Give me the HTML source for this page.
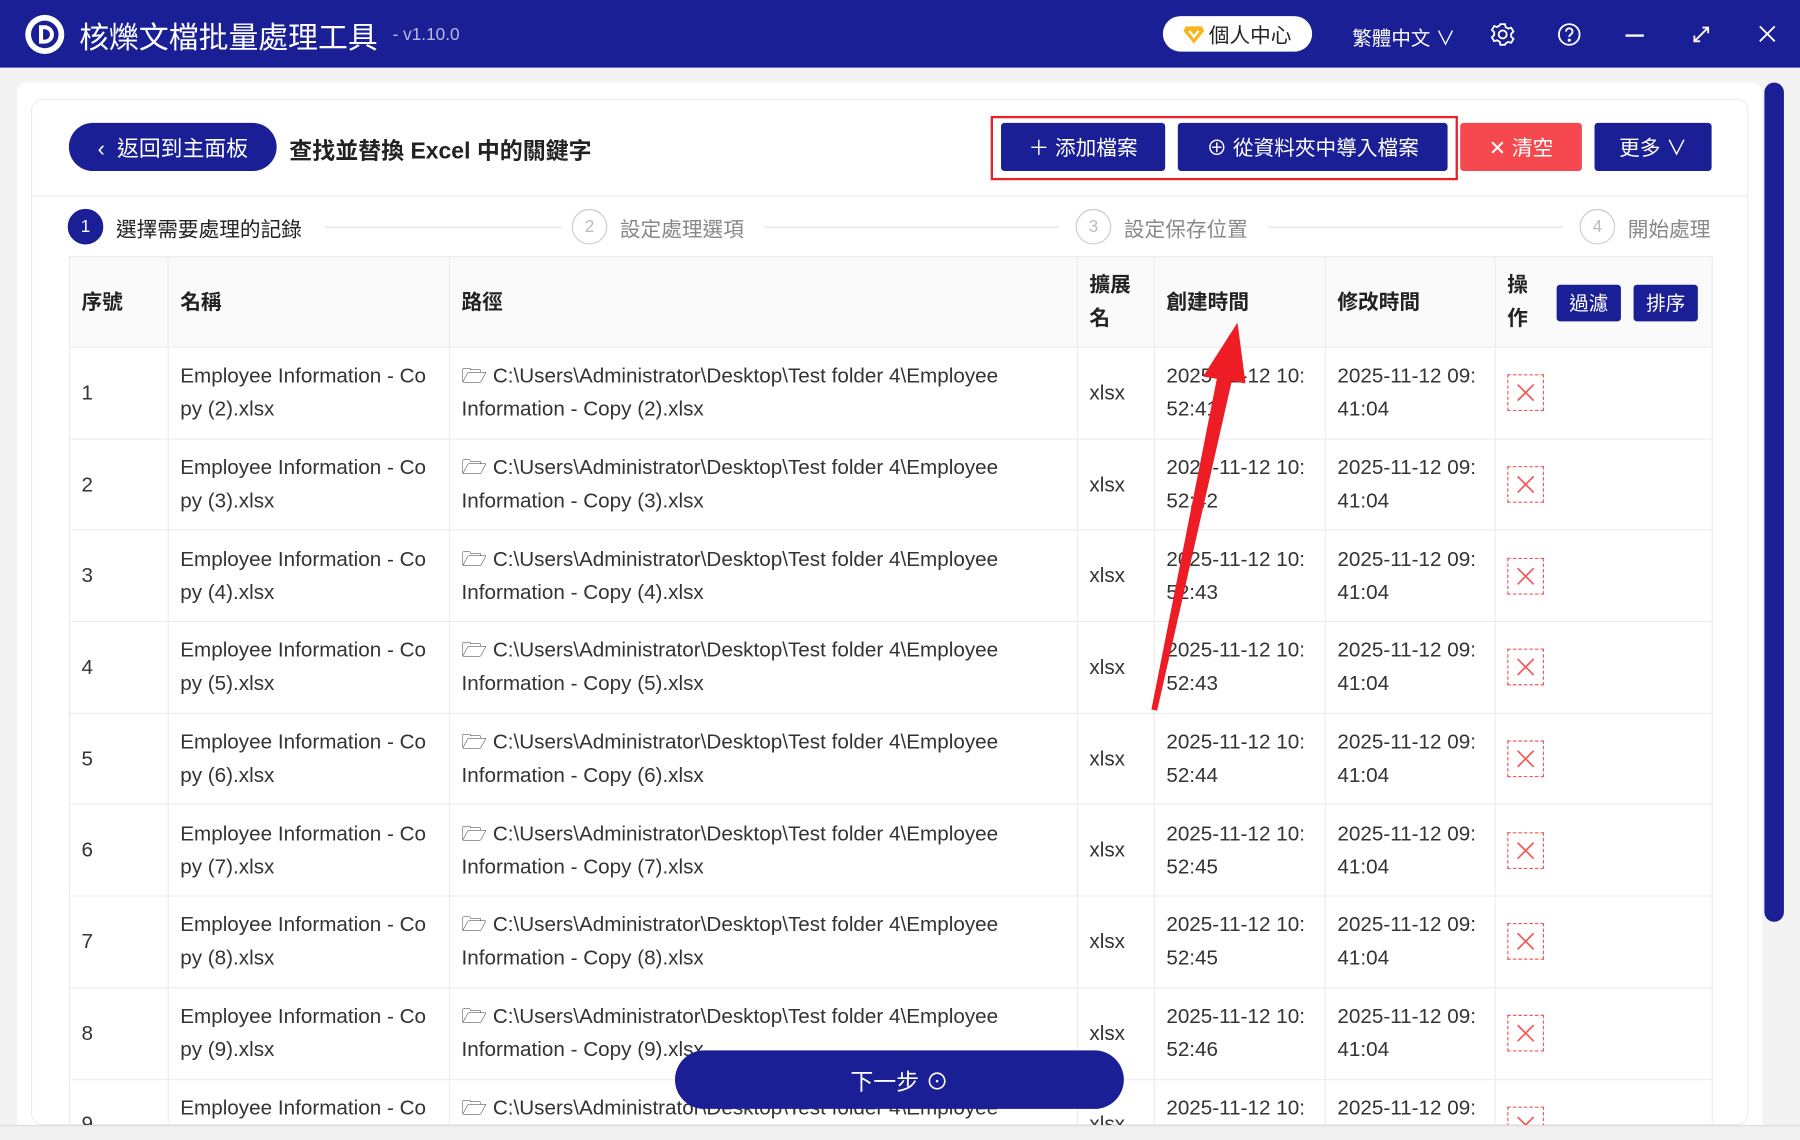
<!DOCTYPE html>
<html><head><meta charset="utf-8">
<style>
*{box-sizing:border-box;margin:0;padding:0}
html,body{width:1800px;height:1140px;overflow:hidden;background:#e9e9e9}
#w{position:absolute;left:0;top:0;width:1568px;height:993px;overflow:hidden;transform:scale(1.147959);transform-origin:0 0;font-family:"Liberation Sans","Noto Sans CJK TC",sans-serif;color:#333}
.a{position:absolute}
.tb{left:0;top:0;width:1568px;height:59px;background:#1a1f96}
.body{left:0;top:59px;width:1568px;height:934px;background:#f3f3f3}
.outer{left:15px;top:72px;width:1520px;height:908px;background:#fff;border-radius:8px 8px 0 0;overflow:hidden}
.card{left:27px;top:86px;width:1496px;height:894px;border:1px solid #ececec;border-radius:10px;background:#fff;overflow:hidden}
.btn{position:absolute;background:#1a1f96;color:#fff;font-size:18px;display:flex;align-items:center;justify-content:center;border-radius:3px}
.step{position:absolute;top:182px;width:31px;height:31px;border-radius:50%;border:1.5px solid #ccc;color:#bbb;font-size:15px;display:flex;align-items:center;justify-content:center}
.stx{position:absolute;top:186px;font-size:18px;color:#888}
.ln{position:absolute;top:197px;height:2px;background:#ececec}
.clip{position:absolute;left:0;top:0;width:1568px;height:980px;overflow:hidden}
table{position:absolute;left:60px;top:223px;border-collapse:collapse;table-layout:fixed;width:1431px}
td,th{border:1px solid #ececec;font-size:18px;line-height:29px;vertical-align:middle;padding:0 10px;text-align:left;white-space:nowrap;overflow:hidden}
th{background:#fafafa;height:79px;font-weight:bold;color:#222;font-size:18px}
td{height:79.7px;color:#333}
.x{width:32px;height:32px;border:1px dashed #f05a5a;display:flex;align-items:center;justify-content:center}
</style></head><body>
<div id="w">
<div class="a tb"></div>
<svg class="a" style="left:21px;top:12px" width="36" height="36"><circle cx="18" cy="18" r="17" fill="#fff"/><circle cx="18" cy="18" r="12" fill="#1a1f96"/><path d="M13 10h5a8 8 0 010 16h-5z" fill="#fff"/><path d="M16.5 13.5h1.5a4.5 4.5 0 010 9h-1.5z" fill="#1a1f96"/></svg>
<div class="a" style="left:69px;top:13px;font-size:26px;color:#fff">核爍文檔批量處理工具</div>
<div class="a" style="left:342px;top:22px;font-size:15px;color:#b8bbe0">- v1.10.0</div>
<div class="a" style="left:1013px;top:14px;width:130px;height:31px;background:#fff;border-radius:16px;font-size:18px;color:#222;display:flex;align-items:center;padding-left:18px"><svg width="18" height="16" viewBox="0 0 18 16"><path d="M2 1h14l2 4-9 11L0 5z" fill="#f6b51d"/><path d="M5 5l4 5 4-5" stroke="#fff" stroke-width="2" fill="none"/></svg><span style="margin-left:4px">個人中心</span></div>
<div class="a" style="left:1178px;top:19px;font-size:17px;color:#fff">繁體中文 ∨</div>
<svg class="a" style="left:1298px;top:19px" width="22" height="22" viewBox="0 0 22 22" fill="none" stroke="#fff" stroke-width="1.6"><circle cx="11" cy="11" r="3.5"/><path d="M9 2h4l.6 2.6 2.3 1.3 2.5-.8 2 3.4-2 1.9v2.6l2 1.9-2 3.4-2.5-.8-2.3 1.3L13 20H9l-.6-2.6-2.3-1.3-2.5.8-2-3.4 2-1.9V9L1.6 7.1l2-3.4 2.5.8 2.3-1.3z"/></svg>
<svg class="a" style="left:1357px;top:20px" width="20" height="20" fill="none" stroke="#fff" stroke-width="1.6"><circle cx="10" cy="10" r="9"/><path d="M7.2 7.5a2.8 2.8 0 115 1.7c-1.2 1-2.2 1.4-2.2 3"/><circle cx="10" cy="15" r=".6" fill="#fff"/></svg>
<div class="a" style="left:1416px;top:30px;width:16px;height:1.6px;background:#fff"></div>
<svg class="a" style="left:1474px;top:22px" width="16" height="16" stroke="#fff" stroke-width="1.6" fill="none"><path d="M2 14L14 2M9 2h5v5M2 9v5h5"/></svg>
<svg class="a" style="left:1532px;top:22px" width="15" height="15" stroke="#fff" stroke-width="1.6"><path d="M1 1l13 13M14 1L1 14"/></svg>

<div class="a body"></div>
<div class="a outer"></div>
<div class="a card"></div>
<div class="a" style="left:1537px;top:72px;width:17px;height:731px;background:#1a1f96;border-radius:9px"></div>

<div class="btn" style="left:60px;top:107px;width:181px;height:42px;border-radius:21px;font-size:19px">‹&nbsp;&nbsp;返回到主面板</div>
<div class="a" style="left:252px;top:115px;font-size:20px;font-weight:bold;color:#222">查找並替換 Excel 中的關鍵字</div>
<div class="a" style="left:863px;top:101px;width:407px;height:56px;border:2.5px solid #e8202a"></div>
<div class="btn" style="left:872px;top:107px;width:143px;height:42px">＋ 添加檔案</div>
<div class="btn" style="left:1026px;top:107px;width:235px;height:42px">⊕ 從資料夾中導入檔案</div>
<div class="btn" style="left:1272px;top:107px;width:106px;height:42px;background:#f5494f">✕ 清空</div>
<div class="btn" style="left:1389px;top:107px;width:102px;height:42px">更多 ∨</div>
<div class="a" style="left:28px;top:170px;width:1494px;height:1px;background:#ececec"></div>

<div class="step" style="left:59px;background:#1a1f96;border-color:#1a1f96;color:#fff">1</div>
<div class="stx" style="left:101px;color:#222">選擇需要處理的記錄</div>
<div class="ln" style="left:283px;width:206px"></div>
<div class="step" style="left:498px">2</div>
<div class="stx" style="left:540px">設定處理選項</div>
<div class="ln" style="left:666px;width:256px"></div>
<div class="step" style="left:937px">3</div>
<div class="stx" style="left:979px">設定保存位置</div>
<div class="ln" style="left:1105px;width:256px"></div>
<div class="step" style="left:1376px">4</div>
<div class="stx" style="left:1418px">開始處理</div>

<div class="clip">
<table>
<colgroup><col style="width:86px"><col style="width:245px"><col style="width:547px"><col style="width:67px"><col style="width:149px"><col style="width:148px"><col style="width:189px"></colgroup>
<tr><th>序號</th><th>名稱</th><th>路徑</th><th>擴展<br>名</th><th>創建時間</th><th>修改時間</th><th style="position:relative">操<br>作<span class="btn" style="left:53px;top:24px;width:56px;height:32px;font-size:17px;font-weight:normal">過濾</span><span class="btn" style="left:120px;top:24px;width:56px;height:32px;font-size:17px;font-weight:normal">排序</span></th></tr>
<tr><td>1</td><td>Employee Information - Co<br>py (2).xlsx</td><td>🗁 C:\Users\Administrator\Desktop\Test folder 4\Employee<br>Information - Copy (2).xlsx</td><td>xlsx</td><td>2025-11-12 10:<br>52:41</td><td>2025-11-12 09:<br>41:04</td><td><div class="x"><svg width="16" height="16" stroke="#f05a5a" stroke-width="1.5"><path d="M1 1l14 14M15 1L1 15"/></svg></div></td></tr>
<tr><td>2</td><td>Employee Information - Co<br>py (3).xlsx</td><td>🗁 C:\Users\Administrator\Desktop\Test folder 4\Employee<br>Information - Copy (3).xlsx</td><td>xlsx</td><td>2025-11-12 10:<br>52:42</td><td>2025-11-12 09:<br>41:04</td><td><div class="x"><svg width="16" height="16" stroke="#f05a5a" stroke-width="1.5"><path d="M1 1l14 14M15 1L1 15"/></svg></div></td></tr>
<tr><td>3</td><td>Employee Information - Co<br>py (4).xlsx</td><td>🗁 C:\Users\Administrator\Desktop\Test folder 4\Employee<br>Information - Copy (4).xlsx</td><td>xlsx</td><td>2025-11-12 10:<br>52:43</td><td>2025-11-12 09:<br>41:04</td><td><div class="x"><svg width="16" height="16" stroke="#f05a5a" stroke-width="1.5"><path d="M1 1l14 14M15 1L1 15"/></svg></div></td></tr>
<tr><td>4</td><td>Employee Information - Co<br>py (5).xlsx</td><td>🗁 C:\Users\Administrator\Desktop\Test folder 4\Employee<br>Information - Copy (5).xlsx</td><td>xlsx</td><td>2025-11-12 10:<br>52:43</td><td>2025-11-12 09:<br>41:04</td><td><div class="x"><svg width="16" height="16" stroke="#f05a5a" stroke-width="1.5"><path d="M1 1l14 14M15 1L1 15"/></svg></div></td></tr>
<tr><td>5</td><td>Employee Information - Co<br>py (6).xlsx</td><td>🗁 C:\Users\Administrator\Desktop\Test folder 4\Employee<br>Information - Copy (6).xlsx</td><td>xlsx</td><td>2025-11-12 10:<br>52:44</td><td>2025-11-12 09:<br>41:04</td><td><div class="x"><svg width="16" height="16" stroke="#f05a5a" stroke-width="1.5"><path d="M1 1l14 14M15 1L1 15"/></svg></div></td></tr>
<tr><td>6</td><td>Employee Information - Co<br>py (7).xlsx</td><td>🗁 C:\Users\Administrator\Desktop\Test folder 4\Employee<br>Information - Copy (7).xlsx</td><td>xlsx</td><td>2025-11-12 10:<br>52:45</td><td>2025-11-12 09:<br>41:04</td><td><div class="x"><svg width="16" height="16" stroke="#f05a5a" stroke-width="1.5"><path d="M1 1l14 14M15 1L1 15"/></svg></div></td></tr>
<tr><td>7</td><td>Employee Information - Co<br>py (8).xlsx</td><td>🗁 C:\Users\Administrator\Desktop\Test folder 4\Employee<br>Information - Copy (8).xlsx</td><td>xlsx</td><td>2025-11-12 10:<br>52:45</td><td>2025-11-12 09:<br>41:04</td><td><div class="x"><svg width="16" height="16" stroke="#f05a5a" stroke-width="1.5"><path d="M1 1l14 14M15 1L1 15"/></svg></div></td></tr>
<tr><td>8</td><td>Employee Information - Co<br>py (9).xlsx</td><td>🗁 C:\Users\Administrator\Desktop\Test folder 4\Employee<br>Information - Copy (9).xlsx</td><td>xlsx</td><td>2025-11-12 10:<br>52:46</td><td>2025-11-12 09:<br>41:04</td><td><div class="x"><svg width="16" height="16" stroke="#f05a5a" stroke-width="1.5"><path d="M1 1l14 14M15 1L1 15"/></svg></div></td></tr>
<tr><td>9</td><td>Employee Information - Co<br>py (10).xlsx</td><td>🗁 C:\Users\Administrator\Desktop\Test folder 4\Employee<br>Information - Copy (10).xlsx</td><td>xlsx</td><td>2025-11-12 10:<br>52:46</td><td>2025-11-12 09:<br>41:04</td><td><div class="x"><svg width="16" height="16" stroke="#f05a5a" stroke-width="1.5"><path d="M1 1l14 14M15 1L1 15"/></svg></div></td></tr>
</table>
</div>
<div class="a" style="left:0;top:980px;width:1568px;height:13px;background:#f0f0f0;border-top:1px solid #ddd"></div>

<svg class="a" style="left:0;top:0" width="1568" height="993"><path d="M1003 618L1060 330L1048 328L1078 281L1085 334L1073 332L1008 619Z" fill="#ee1c25"/></svg>
<div class="btn" style="left:588px;top:915px;width:391px;height:51px;border-radius:26px;font-size:20px">下一步 ⊙</div>
</div>
</body></html>
